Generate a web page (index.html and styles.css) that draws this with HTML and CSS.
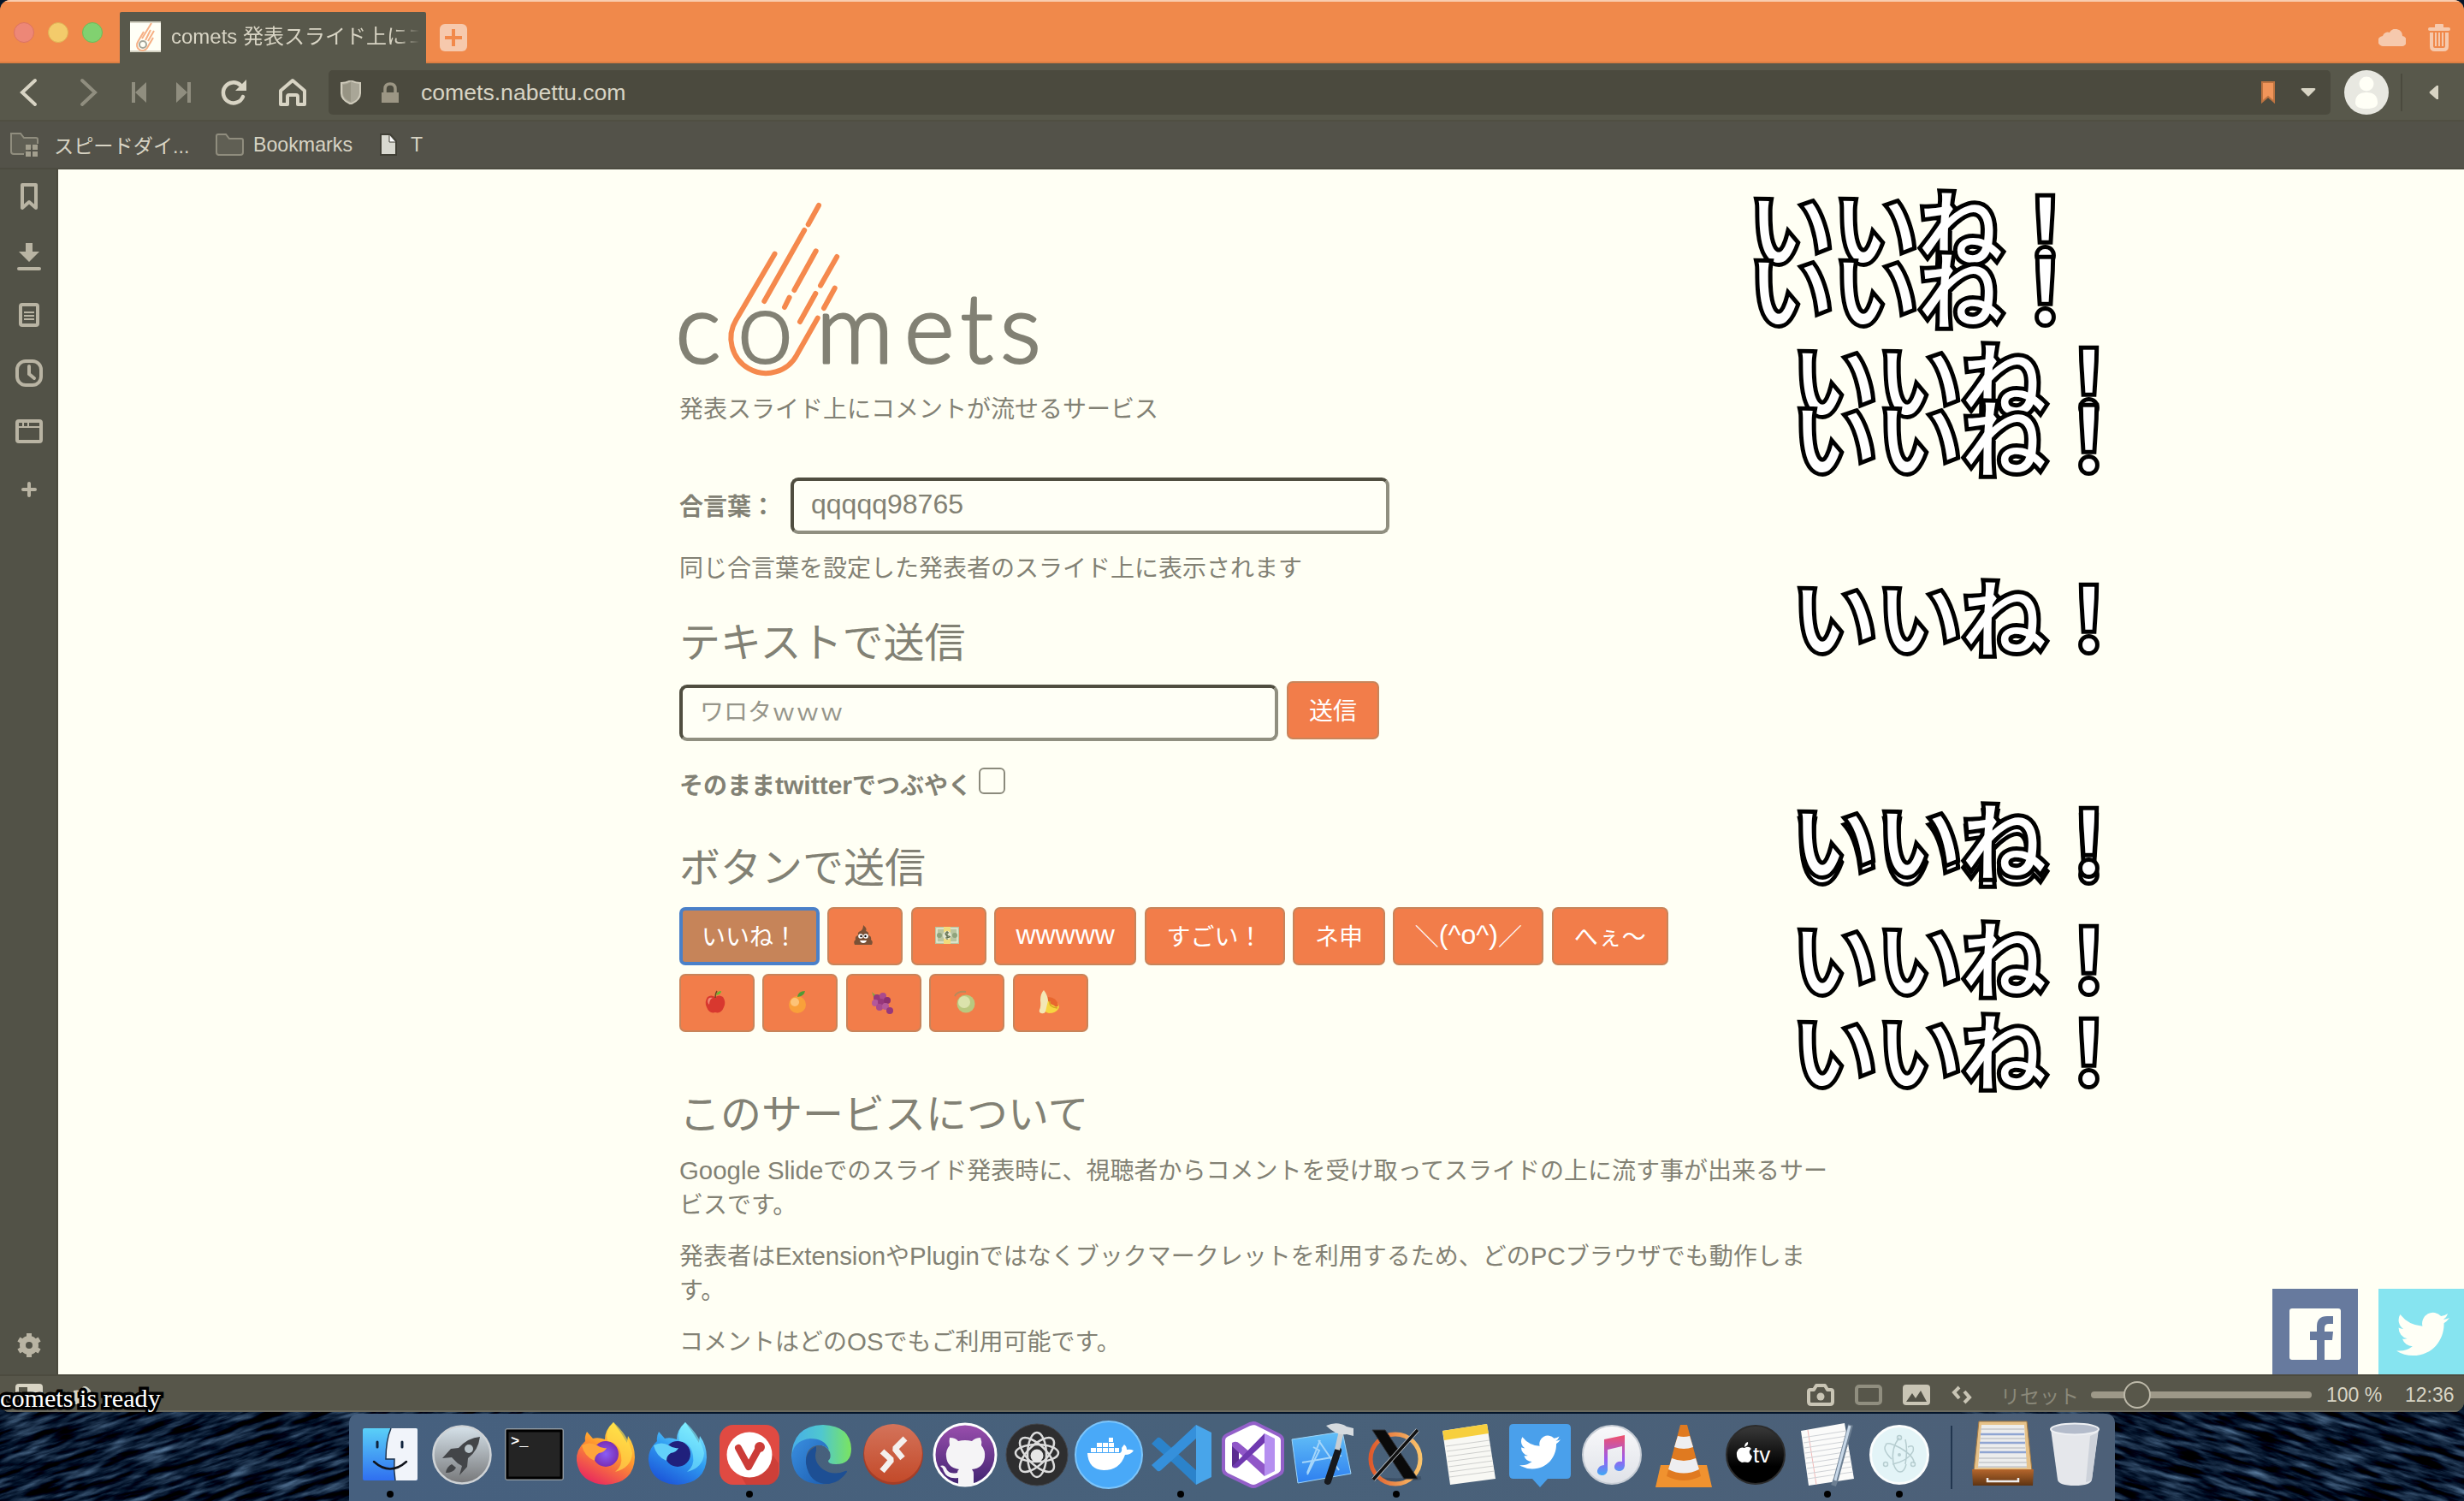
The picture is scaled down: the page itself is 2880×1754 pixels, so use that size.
FILE: index.html
```html
<!DOCTYPE html>
<html lang="ja">
<head>
<meta charset="utf-8">
<title>comets 発表スライド上にコメントが流せるサービス</title>
<link rel="stylesheet" href="styles.css">
</head>
<body>
<svg class="defs" width="0" height="0" aria-hidden="true">
  <defs>
    <linearGradient id="gFinder" x1="0" y1="0" x2="0" y2="1"><stop offset="0" stop-color="#5ad0f8"/><stop offset="1" stop-color="#2f6ff0"/></linearGradient>
    <linearGradient id="gSilver" x1="0" y1="0" x2="0" y2="1"><stop offset="0" stop-color="#d6e2ea"/><stop offset="1" stop-color="#767779"/></linearGradient>
    <linearGradient id="gFox" x1=".8" y1="0" x2=".3" y2="1"><stop offset="0" stop-color="#fff04a"/><stop offset=".45" stop-color="#ff9a2e"/><stop offset="1" stop-color="#e8285f"/></linearGradient>
    <linearGradient id="gFoxBlue" x1=".8" y1="0" x2=".3" y2="1"><stop offset="0" stop-color="#8df2ff"/><stop offset=".5" stop-color="#2f9df2"/><stop offset="1" stop-color="#1c55d8"/></linearGradient>
    <linearGradient id="gEdge" x1="0" y1="0" x2="1" y2="0"><stop offset="0" stop-color="#46aee8"/><stop offset=".5" stop-color="#4fc7d0"/><stop offset="1" stop-color="#7be45f"/></linearGradient>
    <linearGradient id="gEdgeB" x1="0" y1="0" x2="1" y2="1"><stop offset="0" stop-color="#3a8fe0"/><stop offset="1" stop-color="#1c5db0"/></linearGradient>
    <linearGradient id="gRemote" x1="0" y1="0" x2="0" y2="1"><stop offset="0" stop-color="#d4735a"/><stop offset="1" stop-color="#c34a2a"/></linearGradient>
    <linearGradient id="gGit" x1="0" y1="0" x2="0" y2="1"><stop offset="0" stop-color="#9b4fae"/><stop offset="1" stop-color="#3f2370"/></linearGradient>
    <linearGradient id="gX" x1="0" y1="0" x2="0" y2="1"><stop offset="0" stop-color="#63c0f7"/><stop offset="1" stop-color="#2d7ff0"/></linearGradient>
    <linearGradient id="gRing" x1="0" y1="0" x2="1" y2="0"><stop offset="0" stop-color="#df5a2c"/><stop offset="1" stop-color="#fbc46b"/></linearGradient>
    <linearGradient id="gNote" x1="0" y1="0" x2="0" y2="1"><stop offset="0" stop-color="#f0506a"/><stop offset=".6" stop-color="#9a5cf0"/><stop offset="1" stop-color="#3fa9f5"/></linearGradient>
    <linearGradient id="gWhite" x1="0" y1="0" x2="0" y2="1"><stop offset="0" stop-color="#f9f9fb"/><stop offset="1" stop-color="#dfe2e8"/></linearGradient>
    <linearGradient id="gTv" x1="0" y1="0" x2="0" y2="1"><stop offset="0" stop-color="#3a3a3a"/><stop offset=".7" stop-color="#000"/></linearGradient>
    <linearGradient id="gWood" x1="0" y1="0" x2="0" y2="1"><stop offset="0" stop-color="#b5662c"/><stop offset="1" stop-color="#5e3412"/></linearGradient>
    <radialGradient id="gOrb"><stop offset="0" stop-color="#8a5cf5"/><stop offset="1" stop-color="#7a2fb5"/></radialGradient>
    <filter id="sea" x="0" y="0" width="100%" height="100%" color-interpolation-filters="sRGB">
      <feTurbulence type="fractalNoise" baseFrequency="0.022 0.13" numOctaves="4" seed="7"/>
      <feColorMatrix values="0.75 0 0 0 -0.35  0.9 0 0 0 -0.36  1 0 0 0 -0.32  0 0 0 0 1"/>
    </filter>
    <symbol id="bird" viewBox="0 0 24 24"><path d="M24 4.6a10 10 0 0 1-2.8.8 5 5 0 0 0 2.1-2.7 10 10 0 0 1-3.1 1.2 4.9 4.9 0 0 0-8.4 4.5A14 14 0 0 1 1.7 3.1a4.9 4.9 0 0 0 1.5 6.6 4.9 4.9 0 0 1-2.2-.6 4.9 4.9 0 0 0 3.9 4.9 5 5 0 0 1-2.2.1 4.9 4.9 0 0 0 4.6 3.4A9.9 9.9 0 0 1 0 19.5 14 14 0 0 0 7.5 21.700c9.100 0 14-7.500 14-14v-.6A10 10 0 0 0 24 4.600z"/></symbol>
  </defs>
</svg>

<div class="window">
  <header class="titlebar">
    <div class="lights"><i class="red"></i><i class="yellow"></i><i class="green"></i></div>
    <div class="tab">
      <svg class="favicon" viewBox="0 0 36 36"><rect width="36" height="36" fill="#fffff6"/><path d="M0 1h36M0 35h36" stroke="#d5d3c4" stroke-width="2"/><g fill="none" stroke="#f6b085" stroke-width="2"><path d="M16 12L9 24a6.500 6.500 0 0 0 11 7l4-7M25 2L14 20M24 10l-6 12M28 11l-7 12M27 19l-4 7"/></g><circle cx="15" cy="27" r="4" fill="none" stroke="#a5a69a" stroke-width="2"/></svg>
      <span class="tab-title">comets 発表スライド上にコメント</span>
    </div>
    <svg class="newtab" viewBox="0 0 32 32"><rect width="32" height="32" rx="6" fill="#f6c9ad"/><path d="M16 6v20M6 16h20" stroke="#f2894a" stroke-width="4"/></svg>
    <div class="title-right">
      <svg width="32" height="20" viewBox="0 0 32 20"><path d="M6 20a6 6 0 0 1-1-12 6 6 0 0 1 8-4 8 8 0 0 1 15 4 6 6 0 0 1-2 12z" fill="#f6c9ad"/></svg>
      <svg width="26" height="32" viewBox="0 0 26 32" fill="#f6c9ad"><path d="M8 4V1q0-1 1-1h8q1 0 1 1v3h6q2 0 2 2t-2 2H2Q0 8 0 6t2-2z"/><path d="M4 10v16q0 4 4 4h10q4 0 4-4V10" fill="none" stroke="#f6c9ad" stroke-width="4"/><path d="M9 10v16M13 10v16M17 10v16" stroke="#f6c9ad" stroke-width="2"/></svg>
    </div>
  </header>

  <nav class="toolbar">
    <div class="nav-icons">
      <svg class="n1" width="22" height="34" viewBox="0 0 22 34"><path d="M19 3L4 17l15 14" fill="none" stroke="#d8d4c4" stroke-width="4" stroke-linecap="round"/></svg>
      <svg class="n2" width="22" height="34" viewBox="0 0 22 34"><path d="M3 3l15 14L3 31" fill="none" stroke="#908e7f" stroke-width="4" stroke-linecap="round"/></svg>
      <svg class="n3" width="18" height="26" viewBox="0 0 18 26" fill="#908e7f"><path d="M0 1h4v24H0zM17 1v24L4 13z"/></svg>
      <svg class="n4" width="18" height="26" viewBox="0 0 18 26" fill="#908e7f"><path d="M14 1h4v24h-4zM1 1v24l13-12z"/></svg>
      <svg class="n5" width="32" height="32" viewBox="0 0 32 32"><path d="M27 21A12 12 0 1 1 24 7.500" fill="none" stroke="#d8d4c4" stroke-width="4.500" stroke-linecap="round"/><path d="M31 1v13H18z" fill="#d8d4c4"/></svg>
      <svg class="n6" width="34" height="34" viewBox="0 0 34 34"><path d="M3 15L17 3l14 12v16h-8v-9q0-2-2-2h-8q-2 0-2 2v9H3z" fill="none" stroke="#d8d4c4" stroke-width="4" stroke-linejoin="round"/></svg>
    </div>
    <div class="address">
      <svg width="24" height="28" viewBox="0 0 24 28"><path d="M12 0q5 3 11 3v12q0 8-11 12.500Q1 23 1 15V3q6 0 11-3z" fill="#a9a697" stroke="#cfcbbb" stroke-width="2"/><path d="M12 2v23Q3 21 3 15V5q5 0 9-3z" fill="#979484"/></svg>
      <svg class="lock" width="20" height="24" viewBox="0 0 20 24"><path d="M0 12h20v12H0z" fill="#9c9684"/><path d="M4 13V8q0-6 6-6t6 6v5" fill="none" stroke="#9c9684" stroke-width="3.500"/></svg>
      <span class="url">comets.nabettu.com</span>
      <svg class="mark" width="16" height="26" viewBox="0 0 16 26"><path d="M1 1h14v23l-7-6-7 6z" fill="#f0955a" stroke="#bd7340" stroke-width="2"/></svg>
      <svg width="18" height="12" viewBox="0 0 18 12"><path d="M2 1h14q2 0 1 2l-7 7q-1 1-2 0L1 3Q0 1 2 1z" fill="#d8d4c4"/></svg>
    </div>
    <svg class="avatar" viewBox="0 0 52 52"><circle cx="26" cy="26" r="26" fill="#e8e8e1"/><circle cx="26" cy="16" r="8.500" fill="#fffff6"/><path d="M13 38q0-12 13-12t13 12q0 7-13 7t-13-7z" fill="#fffff6"/></svg>
    <i class="divider"></i>
    <svg width="12" height="18" viewBox="0 0 12 18"><path d="M11 1v16h-2L1 10q-1-1 0-2l8-7z" fill="#d8d4c4"/></svg>
  </nav>

  <div class="bookmarks">
    <svg width="34" height="30" viewBox="0 0 34 30"><path d="M16 26H4q-3 0-3-3V2h11l4 5h14q2 0 2 2v5" fill="#605f54" stroke="#908d7e" stroke-width="2"/><path d="M18 15h6v6h-6zM26 15h6v6h-6zM18 23h6v6h-6zM26 23h6v6h-6z" fill="#a39f8e"/></svg>
    <span class="b1">スピードダイ...</span>
    <svg class="bf" width="34" height="28" viewBox="0 0 34 28"><path d="M1 4q0-2 2-2h9l4 5h14q2 0 2 2v14q0 3-3 3H4q-3 0-3-3z" fill="#605f54" stroke="#908d7e" stroke-width="2"/></svg>
    <span class="b2">Bookmarks</span>
    <svg class="file" width="20" height="26" viewBox="0 0 20 26"><path d="M1 1h11l7 8v16H1z" fill="#d9d9d0" stroke="#403f35" stroke-width="2"/><path d="M11 1v9h8z" fill="#fff" stroke="#403f35"/></svg>
    <span>T</span>
  </div>

  <div class="body">
    <aside class="sidebar">
      <svg class="s1" width="20" height="32" viewBox="0 0 20 32"><path d="M2 2h16v27l-8-7-8 7z" fill="none" stroke="#b9b4a3" stroke-width="4" stroke-linejoin="round"/></svg>
      <svg class="s2" width="28" height="32" viewBox="0 0 28 32"><path d="M10 0h8v10h8L14 22 2 10h8z" fill="#b9b4a3"/><path d="M2 30h24" stroke="#b9b4a3" stroke-width="4" stroke-linecap="round"/></svg>
      <svg class="s3" width="24" height="28" viewBox="0 0 24 28"><rect x="2" y="2" width="20" height="24" rx="2" fill="none" stroke="#b9b4a3" stroke-width="4"/><path d="M6 11h12M6 15h12M6 19h12" stroke="#b9b4a3" stroke-width="2"/></svg>
      <svg class="s4" width="32" height="32" viewBox="0 0 32 32" fill="none" stroke="#b9b4a3" stroke-width="4"><rect x="2" y="2" width="28" height="28" rx="10"/><path d="M16 8v9l6 5" stroke-linecap="round"/></svg>
      <svg class="s5" width="32" height="28" viewBox="0 0 32 28"><rect x="2" y="2" width="28" height="24" rx="2" fill="none" stroke="#b9b4a3" stroke-width="4"/><path d="M2 9h28M9 2v6M15 2v6" stroke="#b9b4a3" stroke-width="2"/></svg>
      <svg class="s6" width="18" height="18" viewBox="0 0 18 18"><path d="M9 2v14M2 9h14" stroke="#b9b4a3" stroke-width="4" stroke-linecap="round"/></svg>
      <svg class="gear" width="30" height="30" viewBox="0 0 30 30" fill="none" stroke="#b9b4a3"><circle cx="15" cy="15" r="7.500" stroke-width="7"/><path d="M15 1v5M15 24v5M2.900 8l4.300 2.500M22.800 19.500l4.300 2.500M2.900 22l4.300-2.500M22.800 10.500L27.100 8" stroke-width="6"/></svg>
    </aside>

    <main class="page">
      <svg class="logo" viewBox="794 230 426 216" role="img" aria-label="comets">
        <text class="word" y="424" x="789.500 861.500 954 1057 1122.500 1169">c<tspan class="ring">o</tspan>mets</text>
        <g fill="none" stroke="#f5894d" stroke-width="6" stroke-linecap="round">
          <path d="M905.500 296.700L860.400 373.700A41 41 0 1 0 931.600 414.300L955.700 371.700"/>
          <path d="M957 240l-12.300 22.300M940.200 269l-46.900 83M953.700 293.300L928.400 339M922.600 347.700L917 359M978.200 300L959 333.700M975.700 336.700L963 360M953.300 343L935 376"/>
        </g>
      </svg>
      <p class="tagline">発表スライド上にコメントが流せるサービス</p>

      <div class="form-row key-row">
        <label for="key">合言葉：</label>
        <input id="key" class="field" type="text" value="qqqqq98765">
      </div>
      <p class="hint">同じ合言葉を設定した発表者のスライド上に表示されます</p>

      <h2 class="h-text">テキストで送信</h2>
      <div class="form-row send-row">
        <input class="field" type="text" placeholder="ワロタｗｗｗ">
        <button class="btn send">送信</button>
      </div>
      <div class="tweet-row"><span>そのまま<b class="latin">twitter</b>でつぶやく</span><i class="checkbox"></i></div>

      <h2 class="h-btn">ボタンで送信</h2>
      <div class="buttons">
        <button class="btn active w164">いいね！</button>
        <button class="btn w88"><svg width="26" height="26" viewBox="0 0 26 26"><path d="M13 1q5 4 3 7 4 1 3 5 4 1 3 5 3 2 1 6H3q-2-4 1-6-1-4 3-5-1-4 3-5 3-2 3-7z" fill="#7a5136"/><circle cx="10" cy="14" r="2.800" fill="#fff"/><circle cx="16" cy="14" r="2.800" fill="#fff"/><circle cx="10.500" cy="14" r="1.200"/><circle cx="15.500" cy="14" r="1.200"/><path d="M9 19h8q-1 3-4 3t-4-3z" fill="#fff"/></svg></button>
        <button class="btn w88"><svg width="28" height="20" viewBox="0 0 28 20"><rect width="28" height="20" fill="#b9c5a0"/><rect x="2" y="2" width="24" height="16" fill="none" stroke="#e6ead6" stroke-width="1.500"/><circle cx="5" cy="10" r="3" fill="#8fa37c"/><circle cx="23" cy="10" r="3" fill="#8fa37c"/><rect x="10" width="8" height="20" fill="#f1dc7c"/><circle cx="14" cy="10" r="5" fill="#e4e6cf"/><path d="M16 7q-4-1-4 1t4 3-4 2M14 5v10" fill="none" stroke="#5b6a48" stroke-width="1.200"/></svg></button>
        <button class="btn w166 big">wwwww</button>
        <button class="btn w164">すごい！</button>
        <button class="btn w108">ネ申</button>
        <button class="btn w176">＼<span class="big">(^o^)</span>／</button>
        <button class="btn w136">へぇ〜</button>
        <button class="btn w88"><svg width="26" height="28" viewBox="0 0 26 28"><path d="M13 8q5-3 9 0 4 6 1 12-3 8-10 6-7 2-10-6-3-6 1-12 4-3 9 0z" fill="#d8382f"/><path d="M5 10q2-2 5-1-4 2-4 8-3-3-1-7z" fill="#f28a78"/><path d="M13 9q0-5 2-8" stroke="#6d4a22" stroke-width="1.500" fill="none"/><path d="M14 6q1-5 6-5 0 4-6 5z" fill="#69b531"/></svg></button>
        <button class="btn w88"><svg width="26" height="28" viewBox="0 0 26 28"><circle cx="12" cy="17" r="10" fill="#f9a03a"/><circle cx="9" cy="14" r="5" fill="#fdc377"/><path d="M12 8q1-7 9-7-1 6-9 7z" fill="#4f9a35"/></svg></button>
        <button class="btn w88"><svg width="28" height="28" viewBox="0 0 28 28" fill="#97377c"><path d="M2 2q4 5 10 3l-2 5-6-2z" fill="#78a843"/><circle cx="8" cy="9" r="4"/><circle cx="15" cy="7" r="4" fill="#a94a8e"/><circle cx="6" cy="15" r="4" fill="#b4589a"/><circle cx="13" cy="14" r="4"/><circle cx="20" cy="12" r="4" fill="#8c2f70"/><circle cx="11" cy="20" r="4" fill="#a94a8e"/><circle cx="18" cy="19" r="4" fill="#b4589a"/><circle cx="23" cy="24" r="4"/></svg></button>
        <button class="btn w88"><svg width="26" height="28" viewBox="0 0 26 28"><circle cx="14" cy="16" r="10.500" fill="#b9c97f"/><circle cx="12" cy="14" r="7" fill="#dbe3ac"/><path d="M1 7q3-6 13-5" fill="none" stroke="#b58b5c" stroke-width="2"/></svg></button>
        <button class="btn w88"><svg width="26" height="28" viewBox="0 0 26 28"><path d="M11 9q7 0 12 6 3 4 1 7-3 5-11 5-5-1-6-5z" fill="#f7d640"/><path d="M12 8q10 0 12 10-2 3-5 0-6-2-8-8z" fill="#e8672f"/><path d="M14 13q-1 7 9 8" fill="none" stroke="#d5a524" stroke-width="1.500"/><path d="M7 0q4 5 5 12l-3 13q-1 3-5 2-3-1-2-4 2-4 1-11Q3 4 7 0z" fill="#f3e7b5"/></svg></button>
      </div>

      <h2 class="h-about">このサービスについて</h2>
      <p class="text"><span class="latin">Google Slide</span>でのスライド発表時に、視聴者からコメントを受け取ってスライドの上に流す事が出来るサー<br>ビスです。</p>
      <p class="text">発表者は<span class="latin">Extension</span>や<span class="latin">Plugin</span>ではなくブックマークレットを利用するため、どの<span class="latin">PC</span>ブラウザでも動作しま<br>す。</p>
      <p class="text">コメントはどの<span class="latin">OS</span>でもご利用可能です。</p>

      <div class="social">
        <a class="fb"><svg width="60" height="60" viewBox="0 0 60 60"><rect width="60" height="60" rx="3" fill="#fffff6"/><path d="M32 60V37h-8v-10h8v-6q0-12 12-12h7v9h-5q-5 0-5 5v4h10l-1 10h-9v23z" fill="#677a9e"/></svg></a>
        <a class="tw"><svg width="62" height="62" fill="#fffff6"><use href="#bird"/></svg></a>
      </div>
    </main>
  </div>

  <footer class="statusbar">
    <svg class="panel" width="32" height="26" viewBox="0 0 32 26"><rect width="32" height="26" rx="4" fill="#d8d4c4"/><path d="M4 4h10v12H4z" fill="#58574a"/></svg>
    <svg class="cloud2" width="26" height="26" viewBox="0 0 26 26"><path d="M2 24V8q4-1 8 0 4-10 12 0l2 16z" fill="#d8d4c4"/></svg>
    <svg class="cam" width="32" height="26" viewBox="0 0 32 26"><path d="M2 9q0-2 2-2h4l3-5h10l3 5h4q2 0 2 2v12q0 3-3 3H5q-3 0-3-3z" fill="none" stroke="#c9c5b5" stroke-width="4" stroke-linejoin="round"/><circle cx="16" cy="15" r="4.500" fill="#c9c5b5"/></svg>
    <svg width="32" height="26" viewBox="0 0 32 26"><rect x="2" y="3" width="28" height="20" rx="3" fill="none" stroke="#908e7f" stroke-width="4"/></svg>
    <svg width="32" height="26" viewBox="0 0 32 26"><rect y="1" width="32" height="24" rx="4" fill="#c9c5b5"/><path d="M4 21l7-10 4 6 6-9 7 13z" fill="#525146"/></svg>
    <svg class="code" width="26" height="22" viewBox="0 0 26 22" fill="none" stroke="#c9c5b5" stroke-width="4"><path d="M10 2L4 8l6 7M16 7l6 7-6 6"/></svg>
    <span class="reset">リセット</span>
    <div class="slider"><i></i></div>
    <span class="pct">100 %</span>
    <span class="clock">12:36</span>
  </footer>
</div>

<div class="desktop">
  <svg class="ocean" width="2880" height="106" aria-hidden="true"><g transform="rotate(-18 0 0)"><rect x="-200" y="-100" width="800" height="500" filter="url(#sea)"/></g><g transform="rotate(16 2472 0)"><rect x="2300" y="-250" width="800" height="500" filter="url(#sea)"/></g></svg>
  <div class="dock">
    <div class="app on"><svg viewBox="0 0 84 84"><rect x="10" y="11" width="64" height="61" rx="2" fill="url(#gFinder)"/><path d="M43 11h29q2 0 2 2v57q0 2-2 2H48q-2-12-1-25H37q0-22 6-36z" fill="#f1f4fa"/><path d="M43 11q-6 14-6 36h10q-1 13 1 25" fill="none" stroke="#20344e" stroke-width="1.500"/><path d="M27 27v6M56 27v6" stroke="#10233c" stroke-width="3" stroke-linecap="round"/><path d="M23 50q19 17 38 0" fill="none" stroke="#10131a" stroke-width="2.500" stroke-linecap="round"/></svg></div>
    <div class="app"><svg viewBox="0 0 84 84"><circle cx="42" cy="42" r="33.500" fill="url(#gSilver)" stroke="#cfd3d6" stroke-width="2.500"/><path d="M63 21q-14 1-25 13l-9 1-10 11 11-1 7 7 5 3-3 11 9-10 1-10q12-9 14-25z" fill="#434548"/><circle cx="50" cy="35" r="5" fill="#b9c3c8"/><path d="M30 53l5 4q-3 6-12 6 1-7 7-10z" fill="#434548"/></svg></div>
    <div class="app"><svg viewBox="0 0 84 84"><rect x="9" y="12" width="67" height="59" rx="2" fill="#242424" stroke="#a7acae" stroke-width="1.500"/><rect x="11" y="14" width="63" height="55" fill="none" stroke="#000" stroke-width="3"/><text x="15" y="31" class="prompt">&gt;_</text></svg></div>
    <div class="app"><svg viewBox="0 0 84 84"><path d="M51 4q-10 9-10 20-8-3-14-1l-7-8q-3 6-2 11-11 10-10 23 3 26 34 28 33-2 34-32 0-14-8-25-1 6-1 8Q60 16 51 4z" fill="url(#gFox)"/><circle cx="42" cy="41" r="15" fill="url(#gOrb)"/><path d="M14 31q9-5 18 0 5 4 11 3-2 5-9 6-5 3-5 9-12-5-15-18z" fill="#ffa53a"/><path d="M51 4q-10 9-7 22 14 2 16 17 2 12-7 19 19-5 20-22Q69 20 51 4z" fill="#ffe14a" opacity=".65"/></svg></div>
    <div class="app"><svg viewBox="0 0 84 84"><path d="M51 4q-10 9-10 20-8-3-14-1l-7-8q-3 6-2 11-11 10-10 23 3 26 34 28 33-2 34-32 0-14-8-25-1 6-1 8Q60 16 51 4z" fill="url(#gFoxBlue)"/><circle cx="42" cy="41" r="15" fill="#20207c"/><path d="M14 31q9-5 18 0 5 4 11 3-2 5-9 6-5 3-5 9-12-5-15-18z" fill="#63d0fa"/><path d="M51 4q-10 9-7 22 14 2 16 17 2 12-7 19 19-5 20-22Q69 20 51 4z" fill="#7df0ff" opacity=".6"/></svg></div>
    <div class="app on"><svg viewBox="0 0 84 84"><rect x="7" y="7" width="70" height="70" rx="16" fill="#e04a42"/><path d="M56 24l20 28v10q-1 15-14 15H38L28 60z" fill="#c43a35" opacity=".7"/><circle cx="42" cy="42" r="26.500" fill="#fff"/><path d="M29 34l12 22 11-20" fill="none" stroke="#cc3c38" stroke-width="8" stroke-linecap="round" stroke-linejoin="round"/><circle cx="54" cy="33" r="6" fill="#cc3c38"/></svg></div>
    <div class="app"><svg viewBox="0 0 84 84"><path d="M7 45Q8 8 44 7q32 1 33 28 0 18-18 18-9 0-9-4 4-3 2-10-4-9-16-9Q16 31 7 45z" fill="url(#gEdge)"/><path d="M7 45q2-20 22-22 17 0 22 13-6-6-14-5-12 2-13 16 1 24 24 29Q10 79 7 45z" fill="url(#gEdgeB)"/><path d="M36 32q-13 6-12 20 4 25 27 24 13-2 21-14 0-2-2-1-14 6-26-2-12-9-8-22z" fill="#1d4f94"/></svg></div>
    <div class="app"><svg viewBox="0 0 84 84"><circle cx="42" cy="42" r="35" fill="#a43e28"/><circle cx="42" cy="40" r="34" fill="url(#gRemote)"/><path d="M56 23L44 35l9 11M29 38l11 10-11 13" fill="none" stroke="#f4f0ee" stroke-width="7" stroke-linejoin="bevel"/></svg></div>
    <div class="app"><svg viewBox="0 0 84 84"><circle cx="42" cy="42" r="36" fill="url(#gGit)" stroke="#fff" stroke-width="3"/><path d="M24 22q7 0 10 4 8-2 16 0 4-4 10-4 2 5 1 9 5 6 4 14-2 13-15 14 2 2 2 6v12q-9 3-18 0v-8q-13 2-17-8-1-4-4-6 5-2 8 5 4 5 12 3 0-3 2-4-14-2-15-15-1-7 4-13-1-5 0-9z" fill="#f5f4f6"/></svg></div>
    <div class="app"><svg viewBox="0 0 84 84"><circle cx="42" cy="42" r="36" fill="#2e2e2f" stroke="#424449" stroke-width="1"/><g fill="none" stroke="#dcdcdc" stroke-width="2.500"><ellipse cx="42" cy="42" rx="11" ry="26"/><ellipse cx="42" cy="42" rx="11" ry="26" transform="rotate(45 42 42)"/><ellipse cx="42" cy="42" rx="11" ry="26" transform="rotate(-45 42 42)"/><ellipse cx="42" cy="40" rx="25" ry="10"/></g><circle cx="42" cy="43" r="7.500" fill="#e6e6e6"/></svg></div>
    <div class="app"><svg viewBox="0 0 84 84"><circle cx="42" cy="42" r="39" fill="#49a9f8" stroke="#7cc5fb" stroke-width="2"/><path d="M17 40h38q3-2 2-6l3-4q3 2 3 6 4-1 8 1-3 5-10 5-6 18-25 18-18-1-19-20z" fill="#fff"/><path d="M21 34h6v5h-6zM28 34h6v5h-6zM35 34h6v5h-6zM42 34h6v5h-6zM49 34h5v5h-5zM28 28h6v5h-6zM35 28h6v5h-6zM42 28h6v5h-6zM42 22h5v5h-5z" fill="#fff"/></svg></div>
    <div class="app on"><svg viewBox="0 0 84 84"><path d="M8 29l7-7q2-1 4 1l41 37v17Q34 52 8 29z" fill="#2b83cb"/><path d="M8 54l7 7q2 1 4-1l41-37V7Q34 32 8 54z" fill="#3590db"/><path d="M60 7l18 9v52l-18 9z" fill="#48a5ea"/></svg></div>
    <div class="app"><svg viewBox="0 0 84 84"><path d="M43 5q2 0 4 1l26 13q4 2 4 6v34q0 4-4 6L47 78q-4 2-8 0L12 65q-4-2-4-6V25q0-4 4-6L39 6z" fill="#fff" stroke="#9360c9" stroke-width="4"/><path d="M18 28l8 6v16l-8 6z" fill="#5c2d91"/><path d="M18 28q5-3 9 1l29 24v14L18 32z" fill="#9057c8"/><path d="M18 56q4 3 8 0l30-28V17z" fill="#6f39b0"/><path d="M56 17l12 6v38l-12 6z" fill="#b58ff0"/></svg></div>
    <div class="app"><svg viewBox="0 0 84 84"><path d="M4 24l59-9 10 49-62 11z" fill="url(#gX)" stroke="#9cd4f8"/><path d="M22 63l15-38M35 25l24 35M16 51l46-8M29 33l7 4-14 28" fill="none" stroke="#a5d6fa" stroke-width="2"/><path d="M58 37l-12 36" stroke="#17191d" stroke-width="8" stroke-linecap="round"/><path d="M62 14l-5 22" stroke="#c9ced2" stroke-width="6"/><path d="M44 8q13-6 24 1l8 2v9l-8-2q-12 2-24-10z" fill="#d6dbdf"/></svg></div>
    <div class="app on"><svg viewBox="0 0 84 84"><path d="M13 69q30 5 58 0" stroke="#33465c" stroke-width="4" fill="none" opacity=".6"/><circle cx="41" cy="47" r="29" fill="none" stroke="url(#gRing)" stroke-width="5"/><path d="M14 13h15l38 57H51z" fill="#0a0a0a" stroke="#30343a"/><path d="M67 13L15 71" stroke="#c3c8cd" stroke-width="5"/><path d="M67 13L15 71" stroke="#111" stroke-width="3.500"/></svg></div>
    <div class="app"><svg viewBox="0 0 84 84"><path d="M12 14l52-8 10 64-53 7z" fill="#f8f8f4"/><path d="M12 14l52-8 2 11-52 8z" fill="#f7cf3e"/><g stroke="#cfd0ce" stroke-width="1.200"><path d="M16 32l51-7M17 38l51-7M18 44l51-7M18 50l52-7M19 56l52-7M20 62l52-7M20 68l53-7"/></g></svg></div>
    <div class="app"><svg viewBox="0 0 84 84"><path d="M11 6h62q5 0 5 5v54q0 5-5 5H51l-9 10-9-10H11q-5 0-5-5V11q0-5 5-5z" fill="#4aa0eb"/><svg x="17" y="15" width="50" height="48" viewBox="0 0 24 24" fill="#fff"><use href="#bird"/></svg></svg></div>
    <div class="app"><svg viewBox="0 0 84 84"><circle cx="42" cy="42" r="34" fill="url(#gWhite)" stroke="#c6ccd4" stroke-width="2"/><path d="M33 24l24-5v36q-1 6-7 6-6-1-5-6 2-6 9-5V32l-17 4v24q-1 6-7 6-6-1-5-6 2-6 8-6z" fill="url(#gNote)"/></svg></div>
    <div class="app"><svg viewBox="0 0 84 84"><path d="M15 54h54l6 26H9z" fill="#f0922f"/><path d="M38 7h8l16 60q-20 10-40 0z" fill="#e07a20"/><path d="M35 20q7 2 14 0l4 13q-11 4-22 0zM28 46q14 6 28 0l4 13q-18 9-36 0z" fill="#eeeef0"/></svg></div>
    <div class="app"><svg viewBox="0 0 84 84"><circle cx="42" cy="42" r="34" fill="url(#gTv)" stroke="#2c2c2c" stroke-width="2"/><path d="M29 34q5-3 8 1-5 4 1 9-2 7-5 7-4-1-7 0-7-3-6-12 3-7 9-5zM29 33q0-5 4-6 1 4-4 6z" fill="#fff"/><text x="39" y="51" class="tv">tv</text></svg></div>
    <div class="app on"><svg viewBox="0 0 84 84"><path d="M11 14l51-9 11 65-53 8z" fill="#fbfbfa"/><path d="M19 13l10 64" stroke="#f2b9b9"/><g stroke="#cfd2d6" stroke-width="1.200"><path d="M13 22l51-8M14 28l51-8M15 34l51-8M16 40l51-8M17 46l51-8M17 52l52-8M18 58l52-8M19 64l52-8M19 70l53-8"/></g><path d="M69 7L52 70l-3 8" stroke="#6d7f92" stroke-width="6"/><path d="M68 8L51 72" stroke="#c8d8e8" stroke-width="3"/></svg></div>
    <div class="app on"><svg viewBox="0 0 84 84"><circle cx="42" cy="42" r="33.500" fill="#e3f4f7" stroke="#fbfdfd" stroke-width="3"/><g fill="none" stroke="#b6cdd0" stroke-width="1.500"><path d="M26 30q2-4 17 4 17 10 16 18M33 47q-12-12-6-17M42 22q-10 12-7 30 3 10 8 10t7-9M52 33q8-4 6 5-6 11-24 15M49 24q3 12 0 29"/><circle cx="42" cy="22" r="2.500"/><circle cx="26" cy="53" r="2.500"/><circle cx="58" cy="53" r="2.500"/></g><circle cx="42" cy="42" r="2" fill="#b6cdd0"/></svg></div>
    <i class="dock-sep"></i>
    <div class="app"><svg viewBox="0 0 84 84"><path d="M14 3h56l6 58H8z" fill="#e6c28a" stroke="#a67a42"/><path d="M17 7h50l3 50H13z" fill="#eceded"/><path d="M16 18h51M15 28h53M15 39h54" stroke="#8fa5d2" stroke-width="2.500"/><path d="M16 12h51M16 23h52M15 34h53M14 46h56M14 51h56M13 56h57" stroke="#c3c6ca" stroke-width="1.500"/><path d="M6 59h72l-1 19H7z" fill="url(#gWood)"/><path d="M24 69v4h36v-4" fill="none" stroke="#eee" stroke-width="2.500"/></svg></div>
    <div class="app"><svg viewBox="0 0 84 84"><path d="M14 12l8 59q1 7 20 7t20-7l8-59z" fill="#e5e7eb"/><path d="M60 20l-5 54q6-1 7-3l7-55z" fill="#cdd2da"/><ellipse cx="42" cy="12" rx="28" ry="6.500" fill="#b4bccb" stroke="#eef0f3" stroke-width="2"/></svg></div>
  </div>
</div>

<div class="overlay">
  <span class="cmt c1">いいね！</span>
  <span class="cmt c2">いいね！</span>
  <span class="cmt c3">いいね！</span>
  <span class="cmt c4">いいね！</span>
  <span class="cmt c5">いいね！</span>
  <span class="cmt c6">いいね！</span>
  <span class="cmt c7">いいね！</span>
  <span class="cmt c8">いいね！</span>
  <span class="cmt c9">いいね！</span>
  <span class="ready">comets is ready</span>
</div>
</body>
</html>
```

FILE: styles.css
```css
* { box-sizing: border-box; }
html, body { margin: 0; }
body {
  width: 2880px;
  height: 1754px;
  overflow: hidden;
  position: relative;
  background: #04152a;
  color: #828174;
  font-family: "Liberation Sans", "Noto Sans CJK JP", sans-serif;
}
svg { display: block; flex: none; }
.defs { position: absolute; }
i { display: block; font-style: normal; flex: none; }

/* Browser chrome */
.window { height: 1650px; display: flex; flex-direction: column; background: #58584b; border-radius: 12px; overflow: hidden; position: relative; z-index: 1; }
.titlebar { height: 74px; flex: none; background: #f0894b; border-top: 2px solid #f9cdb0; border-bottom: 2px solid #dd7e42; display: flex; }
.lights { display: flex; gap: 16px; padding: 24px 0 0 16px; width: 140px; flex: none; }
.lights i { width: 24px; height: 24px; border-radius: 50%; }
.red { background: #ed8777; border: 1px solid #dc7362; }
.yellow { background: #f3cb6b; border: 1px solid #dfb155; }
.green { background: #81d170; border: 1px solid #6dbb57; }
.tab { width: 358px; height: 60px; margin-top: 12px; background: #58584b; border-radius: 2px 2px 0 0; display: flex; align-items: center; padding: 0 8px 2px 12px; gap: 12px; }
.favicon { width: 36px; height: 36px; }
.tab-title { flex: 1; min-width: 0; overflow: hidden; white-space: nowrap; font-size: 24px; line-height: 36px; color: #d8d4c4; -webkit-mask-image: linear-gradient(90deg, #000 90%, transparent); mask-image: linear-gradient(90deg, #000 90%, transparent); }
.newtab { width: 32px; height: 32px; margin: 26px 0 0 16px; }
.title-right { margin-left: auto; display: flex; gap: 26px; padding: 26px 16px 0 0; }
.title-right svg:first-child { margin-top: 6px; }

.toolbar { height: 68px; flex: none; display: flex; align-items: center; border-bottom: 2px solid #504f42; padding: 2px 29px 0 0; }
.nav-icons { width: 384px; flex: none; display: flex; align-items: center; padding-left: 22px; }
.n2 { margin-left: 49px; }
.n3 { margin-left: 39px; }
.n4 { margin-left: 33px; }
.n5 { margin-left: 34px; }
.n6 { margin-left: 36px; }
.address { width: 2340px; height: 52px; background: #4b4a3e; border-radius: 5px; display: flex; align-items: center; padding: 0 17px 0 14px; }
.lock { margin-left: 24px; }
.url { font-size: 26.6px; color: #d8d4c4; margin-left: 26px; flex: 1; padding-top: 1px; }
.mark { margin-right: 30px; }
.avatar { width: 52px; height: 52px; margin-left: 16px; }
.divider { width: 2px; height: 44px; background: #4b4a3e; margin-left: 14px; margin-right: auto; }

.bookmarks { height: 56px; flex: none; background: #535249; border-bottom: 2px solid #4c4b40; display: flex; align-items: center; font-size: 23.200px; color: #d8d4c4; padding-left: 12px; }
.b1 { margin-left: 17px; width: 189px; white-space: nowrap; }
.b2 { margin-left: 10px; width: 117px; padding-top: 1px; }
.file { margin: 0 16px 0 31px; }

.body { flex: 1; min-height: 0; display: flex; }
.sidebar { width: 68px; flex: none; background: #525247; border-right: 2px solid #4b4a3e; display: flex; flex-direction: column; align-items: center; padding: 16px 0 19px 2px; }
.s2 { margin-top: 38px; }
.s3 { margin-top: 38px; }
.s4 { margin-top: 38px; }
.s5 { margin-top: 38px; }
.s6 { margin-top: 45px; }
.gear { margin-top: auto; }

/* Page */
.page { flex: 1; background: #fffff4; padding: 32px 0 0 726px; position: relative; overflow: hidden; font-size: 28px; }
.logo { width: 426px; height: 216px; overflow: visible; }
.word { font-family: Lato, sans-serif; font-weight: 300; font-size: 112px; fill: #828174; stroke: #828174; stroke-width: 3px; stroke-linejoin: round; }
.ring { font-size: 118px; stroke-width: 2px; }
p { margin: 0; line-height: 40px; white-space: nowrap; }
.tagline { margin-top: 13px; }
h2 { margin: 0; font-size: 48px; line-height: 56px; font-weight: 400; }
.form-row { display: flex; }
.key-row { margin-top: 59px; height: 66px; align-items: center; }
.key-row label { width: 130px; font-weight: 700; padding-bottom: 3px; }
.field { width: 700px; height: 66px; border: 4px solid; border-color: #504e40 #908f80 #908f80 #504e40; border-radius: 9px; background: #fffff6; color: #828174; font: 32px "Liberation Sans", "Noto Sans CJK JP", sans-serif; padding: 0 20px 3px; }
.field::placeholder { font-size: 28px; color: #96958a; opacity: 1; }
.hint { margin-top: 21px; }
.h-text { margin-top: 39px; }
.send-row { margin-top: 16px; height: 70px; gap: 10px; }
.send-row .field { align-self: flex-end; }
.btn { height: 68px; padding: 0 0 3px; border: 2px solid #c8845a; border-radius: 7px; background: #f27d4a; color: #fff; font: 28px "Liberation Sans", "Noto Sans CJK JP", sans-serif; display: flex; align-items: center; justify-content: center; white-space: nowrap; }
.btn svg { margin: 1px 4px 0 0; }
.send { width: 108px; }
.tweet-row { margin-top: 30px; height: 34px; display: flex; gap: 8px; font-weight: 700; }
.tweet-row span { line-height: 45px; white-space: nowrap; }
.checkbox { width: 31px; height: 31px; margin-top: 1px; border: 2px solid #8b8a7c; border-radius: 6px; }
.latin { font-size: 29.400px; line-height: 1; }
.tweet-row .latin { font-size: 30px; }
.h-btn { margin-top: 57px; }
.buttons { margin-top: 17px; width: 1200px; display: flex; flex-wrap: wrap; gap: 10px 9.400px; }
.btn.big, .big { font-size: 32px; }
.btn.active { background: #c68459; border: 4px solid #4a80c8; }
.w88 { width: 88px; }
.w108 { width: 108px; }
.w136 { width: 136px; }
.w164 { width: 164px; }
.w166 { width: 166px; }
.w176 { width: 176px; }
.h-about { margin-top: 69px; }
.text { margin-top: 18px; }
.text + .text { margin-top: 20px; }
.social { position: absolute; right: 0; bottom: 0; display: flex; gap: 24px; }
.social a { width: 100px; height: 100px; display: flex; align-items: center; justify-content: center; }
.fb { background: #677a9e; padding-top: 6px; }
.tw { background: #86e4f0; padding-top: 6px; padding-left: 4px; }

.statusbar { height: 44px; flex: none; background: #57564a; border-top: 2px solid #4c4b3f; border-bottom: 2px solid #6b6a5e; display: flex; align-items: center; padding: 4px 13px 0 18px; font-size: 23px; color: #d8d4c4; white-space: nowrap; }
.cloud2 { margin-left: 34px; }
.cam { margin-left: auto; }
.statusbar .cam ~ svg { margin-left: 24px; }
.statusbar .code { margin-left: 27px; }
.reset { margin-left: 32px; color: #8b897a; width: 106px; }
.slider { width: 258px; height: 8px; border-radius: 4px; background: #9d9888; }
.slider i { width: 32px; height: 32px; margin: -12px 0 0 38px; border-radius: 50%; background: #58574a; border: 2px solid #bdb9a9; }
.pct { margin-left: 17px; width: 92px; }
.clock { width: 56px; }

/* Desktop and dock */
.desktop { height: 104px; display: flex; padding: 2px 0 0 408px; position: relative; }
.ocean { position: absolute; left: 0; top: -2px; }
.dock { position: relative; width: 2064px; height: 102px; background: linear-gradient(90deg, #46607f, #48617a 50%, #4d6078); border-radius: 10px 10px 0 0; display: flex; padding: 6px 0 0 6px; }
.app { width: 84px; height: 96px; flex: none; }
.app svg { width: 84px; height: 84px; }
.app svg svg { width: 50px; height: 48px; }
.on::after { content: ""; display: block; width: 8px; height: 8px; border-radius: 50%; background: #000; margin: 0 auto; }
.dock-sep { width: 2px; height: 74px; background: #22364f; margin: 8px 17px 0 18px; }
.prompt { font: 700 17px "Liberation Mono", monospace; fill: #fff; }
.tv { font: 26px "Liberation Sans", sans-serif; fill: #fff; }

/* Comments flying over the screen */
.overlay { position: absolute; inset: 0; z-index: 2; pointer-events: none; }
.cmt { position: absolute; left: 2095px; font-family: "Noto Sans CJK JP", sans-serif; font-weight: 500; font-size: 99px; line-height: 100px; color: #fff; white-space: nowrap; -webkit-text-stroke: 10px #000; paint-order: stroke fill; }
.c1 { left: 2044px; top: 212px; }
.c2 { left: 2044px; top: 284px; }
.c3 { top: 390px; }
.c4 { top: 457px; }
.c5 { top: 667px; }
.c6 { top: 936px; }
.c7 { top: 928px; }
.c8 { top: 1066px; }
.c9 { top: 1174px; }
.ready { position: absolute; left: 0; top: 1616px; font: 30.200px/36px "Liberation Serif", serif; color: #fff; white-space: nowrap; -webkit-text-stroke: 7px #000; paint-order: stroke fill; }
```
